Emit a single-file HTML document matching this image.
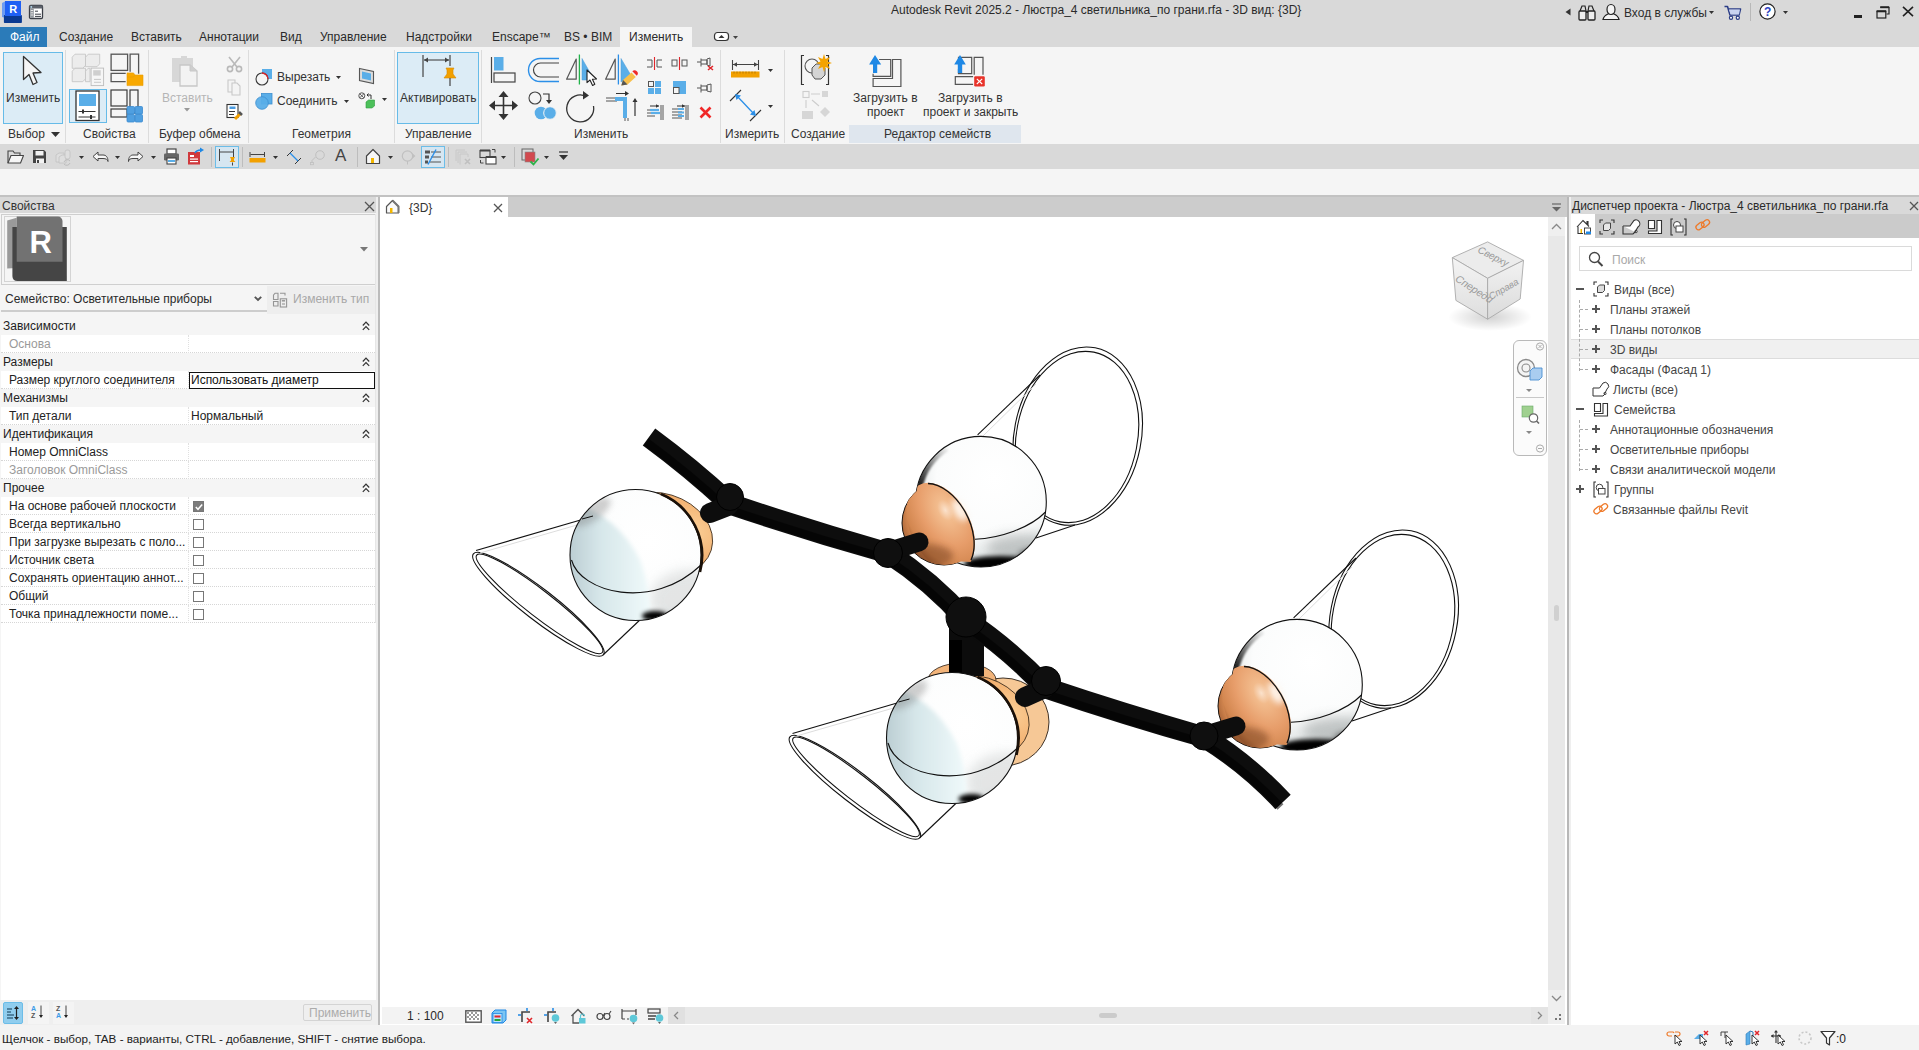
<!DOCTYPE html>
<html><head><meta charset="utf-8">
<style>
*{margin:0;padding:0;box-sizing:border-box}
html,body{width:1919px;height:1050px;overflow:hidden;background:#f5f5f5;font-family:"Liberation Sans",sans-serif;font-size:12px;color:#222}
.a{position:absolute}
.t{position:absolute;white-space:nowrap;line-height:12px}
svg{position:absolute;overflow:visible}
</style></head><body>

<div class="a" style="left:0px;top:0px;width:1919px;height:47px;background:#d9d9d9;"></div>
<div class="a" style="left:0px;top:47px;width:1919px;height:97px;background:#f5f5f5;"></div>
<div class="a" style="left:0px;top:144px;width:1919px;height:25px;background:#d9d9d9;"></div>
<div class="a" style="left:0px;top:169px;width:1919px;height:26px;background:#f5f5f5;"></div>
<div class="a" style="left:0px;top:195px;width:1919px;height:2px;background:#c2c2c2;"></div>
<svg style="left:0px;top:0px;" width="26" height="26" viewBox="0 0 26 26">
<path d="M2 3 L5 1.5 L5 17.8 L2 17 Z" fill="#6d9cf2"/>
<rect x="3.9" y="15" width="18" height="8" rx="0.8" fill="#0b3a91"/>
<rect x="5" y="1" width="16" height="15" fill="#1f60f4"/>
<text x="9.2" y="13.3" font-family="Liberation Sans" font-weight="bold" font-size="11" fill="#fff">R</text>
</svg>
<svg style="left:28px;top:4px;" width="16" height="16" viewBox="0 0 16 16">
<rect x="1.5" y="1.5" width="13" height="13" rx="1.2" fill="#fff" stroke="#3b3f47" stroke-width="1.3"/>
<rect x="1.5" y="1.5" width="13" height="3" fill="#5d626b"/>
<rect x="2.5" y="2.2" width="1.6" height="1.5" fill="#bfe9ff"/>
<rect x="2.2" y="4.5" width="3.6" height="9.3" fill="#8f949b"/>
<path d="M2.8 6.5h2.4M2.8 8.8h2.4M2.8 11h2.4" stroke="#e8e8e8" stroke-width="1"/>
<path d="M7 7.2h3M7 10.2h6M7 12.4h6" stroke="#3b3f47" stroke-width="1"/>
</svg>
<div class="t" style="left:891px;top:4px;color:#2a2a2a;font-size:12px;">Autodesk Revit 2025.2 - Люстра_4 светильника_по грани.rfa - 3D вид: {3D}</div>
<svg style="left:1565px;top:8px;" width="6" height="8" viewBox="0 0 6 8"><path d="M5.5 0.5 L0.5 4 L5.5 7.5Z" fill="#333"/></svg>
<svg style="left:1578px;top:4px;" width="18" height="17" viewBox="0 0 18 17">
<path d="M2 7 L4 2 L7 2 L8 7 M10 7 L11 2 L14 2 L16 7" fill="#ddd" stroke="#222" stroke-width="1.2"/>
<rect x="1" y="7" width="7" height="9" rx="1" fill="#eee" stroke="#222" stroke-width="1.3"/>
<rect x="10" y="7" width="7" height="9" rx="1" fill="#eee" stroke="#222" stroke-width="1.3"/>
<path d="M8 8h2" stroke="#222" stroke-width="2"/>
</svg>
<svg style="left:1602px;top:3px;" width="18" height="18" viewBox="0 0 18 18">
<path d="M1 16.5 C2 12 5 11.5 7 10.5 L11 10.5 C13 11.5 16 12 17 16.5 Z" fill="#f4f4f4" stroke="#222" stroke-width="1.2"/>
<ellipse cx="9" cy="6.5" rx="4" ry="5" fill="#f4f4f4" stroke="#222" stroke-width="1.2"/>
</svg>
<div class="t" style="left:1624px;top:7px;color:#2d2d2d;font-size:12px;">Вход в службы</div>
<svg style="left:1709px;top:11px;" width="5" height="3" viewBox="0 0 5 3"><path d="M0 0h5L2.5 3Z" fill="#333"/></svg>
<svg style="left:1724px;top:5px;" width="18" height="15" viewBox="0 0 18 15">
<path d="M0.5 1.5 L3.5 1.5 L6 10 L15 10 L16.5 4 L4.5 4" fill="none" stroke="#2b3d86" stroke-width="1.6" stroke-linejoin="round"/>
<path d="M5 4.5 L16 4.5 L15 9.5 L6.5 9.5Z" fill="#c9d3f0"/>
<circle cx="7" cy="12.8" r="1.6" fill="#fff" stroke="#2b3d86" stroke-width="1.2"/>
<circle cx="13.8" cy="12.8" r="1.6" fill="#fff" stroke="#2b3d86" stroke-width="1.2"/>
</svg>
<div class="a" style="left:1750px;top:3px;width:1px;height:18px;background:#b8b8b8;"></div>
<svg style="left:1759px;top:3px;" width="18" height="18" viewBox="0 0 18 18">
<circle cx="8.5" cy="8.5" r="7.6" fill="#fff" stroke="#222" stroke-width="1.2"/>
<text x="8.6" y="13" text-anchor="middle" font-family="Liberation Sans" font-weight="bold" font-size="12" fill="#2b42c2">?</text>
</svg>
<svg style="left:1783px;top:11px;" width="5" height="3" viewBox="0 0 5 3"><path d="M0 0h5L2.5 3Z" fill="#333"/></svg>
<div class="a" style="left:1854px;top:15px;width:8px;height:3px;background:#222;"></div>
<svg style="left:1876px;top:6px;" width="15" height="13" viewBox="0 0 15 13">
<path d="M4.5 1.5h8.5v6.5h-2.5" fill="none" stroke="#222" stroke-width="1.2"/>
<path d="M4.2 1.2h9" stroke="#222" stroke-width="2"/>
<rect x="1" y="5.5" width="8.8" height="6.5" fill="none" stroke="#222" stroke-width="1.2"/>
<path d="M0.6 5.2h9.6" stroke="#222" stroke-width="2"/>
</svg>
<svg style="left:1902px;top:6px;" width="12" height="11" viewBox="0 0 12 11"><path d="M1 0.8 L11 10.2 M11 0.8 L1 10.2" stroke="#222" stroke-width="1.6"/></svg>
<div class="a" style="left:0px;top:27px;width:47px;height:20px;background:#2b7bb9;"></div>
<div class="t" style="left:10px;top:31px;color:#ffffff;font-size:12px;">Файл</div>
<div class="t" style="left:59px;top:31px;color:#2a2a2a;font-size:12px;">Создание</div>
<div class="t" style="left:131px;top:31px;color:#2a2a2a;font-size:12px;">Вставить</div>
<div class="t" style="left:199px;top:31px;color:#2a2a2a;font-size:12px;">Аннотации</div>
<div class="t" style="left:280px;top:31px;color:#2a2a2a;font-size:12px;">Вид</div>
<div class="t" style="left:320px;top:31px;color:#2a2a2a;font-size:12px;">Управление</div>
<div class="t" style="left:406px;top:31px;color:#2a2a2a;font-size:12px;">Надстройки</div>
<div class="t" style="left:492px;top:31px;color:#2a2a2a;font-size:12px;">Enscape™</div>
<div class="t" style="left:564px;top:31px;color:#2a2a2a;font-size:12px;">BS • BIM</div>
<div class="a" style="left:620px;top:27px;width:72px;height:20px;background:#f5f5f5;"></div>
<div class="t" style="left:629px;top:31px;color:#2a2a2a;font-size:12px;">Изменить</div>
<svg style="left:713px;top:31px;" width="24" height="12" viewBox="0 0 24 12">
<rect x="1.5" y="1.5" width="14" height="8" rx="3" fill="#fff" stroke="#333" stroke-width="1.2"/>
<path d="M5.5 7 L8.5 4 L11.5 7Z" fill="#333"/>
<path d="M20 5h5l-2.5 3z" fill="#444"/>
</svg>
<div class="a" style="left:65px;top:50px;width:1px;height:93px;background:#dcdcdc;"></div>
<div class="a" style="left:148px;top:50px;width:1px;height:93px;background:#dcdcdc;"></div>
<div class="a" style="left:248px;top:50px;width:1px;height:93px;background:#dcdcdc;"></div>
<div class="a" style="left:394px;top:50px;width:1px;height:93px;background:#dcdcdc;"></div>
<div class="a" style="left:481px;top:50px;width:1px;height:93px;background:#dcdcdc;"></div>
<div class="a" style="left:720px;top:50px;width:1px;height:93px;background:#dcdcdc;"></div>
<div class="a" style="left:784px;top:50px;width:1px;height:93px;background:#dcdcdc;"></div>
<div class="t" style="left:8px;top:128px;color:#333333;font-size:12px;">Выбор</div>
<svg style="left:51px;top:132px;" width="9" height="5" viewBox="0 0 9 5"><path d="M0 0h9L4.5 5z" fill="#333"/></svg>
<div class="t" style="left:83px;top:128px;color:#333333;font-size:12px;">Свойства</div>
<div class="t" style="left:159px;top:128px;color:#333333;font-size:12px;">Буфер обмена</div>
<div class="t" style="left:292px;top:128px;color:#333333;font-size:12px;">Геометрия</div>
<div class="t" style="left:405px;top:128px;color:#333333;font-size:12px;">Управление</div>
<div class="t" style="left:574px;top:128px;color:#333333;font-size:12px;">Изменить</div>
<div class="t" style="left:725px;top:128px;color:#333333;font-size:12px;">Измерить</div>
<div class="t" style="left:791px;top:128px;color:#333333;font-size:12px;">Создание</div>
<div class="a" style="left:849px;top:125px;width:172px;height:18px;background:#dfe6ee;"></div>
<div class="t" style="left:884px;top:128px;color:#333333;font-size:12px;">Редактор семейств</div>
<div class="a" style="left:3px;top:52px;width:60px;height:72px;background:#dcecf6;border:1px solid #66bbe8"></div>
<svg style="left:22px;top:55px;" width="21" height="33" viewBox="0 0 21 33"><path d="M1.5 1.5 L1.5 24.5 L7 19.5 L11 29.5 L15 27.5 L11 18 L19 17.5 Z" fill="#f5f5f5" stroke="#333" stroke-width="1.3" stroke-linejoin="round"/></svg>
<div class="t" style="left:6px;top:92px;color:#333333;font-size:12px;">Изменить</div>
<svg style="left:68px;top:50px;" width="80" height="40" viewBox="0 0 80 40">
<g fill="#ececec" stroke="#c6c6c6" stroke-width="0.9">
<path d="M4.2,7.2 L7,4.2 L17.5,4.2 L17.5,15.3 L14.8,18.3 L4.2,18.3 Z"/>
<path d="M17.5,7.2 L20.3,4.2 L31.7,4.2 L31.7,13.8 L29,16.7 L17.5,16.7 Z"/>
<path d="M4.2,21.2 L7,18.3 L17.5,18.3 L17.5,28.8 L14.8,31.7 L4.2,31.7 Z"/>
<path d="M17.5,21.2 L20,18.3 L22,18.3 L22,31.7 L17.5,31.7 Z"/>
</g>
<rect x="23.1" y="18.1" width="12.5" height="17.5" fill="#f6f6f6" stroke="#bdbdbd" stroke-width="0.9"/>
<rect x="25.2" y="20.2" width="7.5" height="5.4" fill="#cfcfcf"/>
<path d="M26,29.4h7M26,32.3h7" stroke="#c2c2c2" stroke-width="0.9"/>
<g fill="none" stroke="#555" stroke-width="1.3">
<rect x="43.1" y="4.2" width="16.5" height="16.2"/>
<path d="M62.1,21.7 V4.2 H70.6 V23.7"/>
<path d="M57.7,23.3 H43.1 V31.7 H57.7"/>
</g>
<path d="M59,22.9 H65.5 L67,25 H75 V35.6 H59 Z" fill="#f8a800" stroke="#e89c00" stroke-width="0.6"/>
<path d="M59,27 H65.5 L67,25" fill="none" stroke="#e89c00" stroke-width="0.6"/>
</svg>
<div class="a" style="left:69px;top:89px;width:38px;height:34px;background:#dcecf6;border:1px solid #66bbe8"></div>
<svg style="left:75px;top:90px;" width="26" height="32" viewBox="0 0 26 32">
<rect x="1" y="1" width="23" height="29.5" fill="#fff" stroke="#333" stroke-width="1.3"/>
<rect x="4" y="4" width="17" height="12" fill="#5aaee8"/>
<path d="M3.5 21.5h17M3.5 27h17" stroke="#333" stroke-width="1.1"/>
<path d="M8 19.5v4M16 25v4" stroke="#333" stroke-width="2"/>
</svg>
<svg style="left:110px;top:89px;" width="34" height="34" viewBox="0 0 34 34">
<g fill="none" stroke="#3a3a3a" stroke-width="1.2">
<rect x="1" y="1" width="16" height="16"/><rect x="20" y="1" width="8" height="23"/><rect x="1" y="20" width="16" height="8"/>
</g>
<g fill="#4f9fe0" stroke="#3a8ad0" stroke-width="0.8">
<rect x="17" y="17.5" width="7.5" height="7.5" rx="1"/><rect x="25" y="17.5" width="7.5" height="7.5" rx="1"/>
<rect x="17" y="25.5" width="7.5" height="7.5" rx="1"/><rect x="25" y="25.5" width="7.5" height="7.5" rx="1"/>
</g>
</svg>
<svg style="left:171px;top:54px;" width="28" height="34" viewBox="0 0 28 34">
<path d="M1 4 L10 4 L10 2 L16 2 L16 4 L22 4 L22 28 L1 28Z" fill="#d7d7d7"/>
<path d="M9 11 L19 11 L26 17 L26 32 L9 32Z" fill="#f3f3f3" stroke="#c8c8c8" stroke-width="1.3"/>
<path d="M19 11 L19 17 L26 17" fill="#cfcfcf" stroke="#c8c8c8" stroke-width="1"/>
</svg>
<div class="t" style="left:162px;top:92px;color:#b5b5b5;font-size:12px;">Вставить</div>
<svg style="left:184px;top:108px;" width="6" height="4" viewBox="0 0 6 4"><path d="M0 0h6L3 3.5z" fill="#999"/></svg>
<svg style="left:226px;top:56px;" width="17" height="16" viewBox="0 0 17 16">
<g stroke="#b9b9b9" stroke-width="1.6" fill="none">
<path d="M3 1 L11 11 M14 1 L6 11"/><circle cx="4" cy="13" r="2.6"/><circle cx="13" cy="13" r="2.6"/></g></svg>
<svg style="left:227px;top:79px;" width="14" height="17" viewBox="0 0 14 17"><g fill="#f4f4f4" stroke="#c8c8c8" stroke-width="1.1"><path d="M1 1h7v12H1z"/><path d="M5 4h5l3 3v9H5z"/></g></svg>
<svg style="left:226px;top:103px;" width="17" height="17" viewBox="0 0 17 17">
<rect x="1" y="1.5" width="11" height="13" fill="#fff" stroke="#333" stroke-width="1.1"/>
<rect x="3.5" y="3.5" width="6" height="2.5" fill="#4a9be0"/>
<path d="M3 8.5h6M3 11.5h5" stroke="#333" stroke-width="1"/>
<path d="M9 16 L15 10" stroke="#f2a000" stroke-width="3"/>
<path d="M13 9 L16 12" stroke="#555" stroke-width="2.5"/>
</svg>
<svg style="left:255px;top:68px;" width="18" height="18" viewBox="0 0 18 18">
<rect x="7" y="1" width="10" height="10" fill="#5aaee8"/>
<circle cx="7" cy="11" r="6" fill="#f5f5f5" stroke="#3a3a3a" stroke-width="1.1"/>
<path d="M7 5 A6 6 0 0 1 13 11" fill="none" stroke="#d9252a" stroke-width="1.3"/>
</svg>
<div class="t" style="left:277px;top:71px;color:#333333;font-size:12px;">Вырезать</div>
<svg style="left:336px;top:76px;" width="5" height="4" viewBox="0 0 5 4"><path d="M0 0h5L2.5 3z" fill="#333"/></svg>
<svg style="left:255px;top:93px;" width="18" height="17" viewBox="0 0 18 17">
<rect x="6.5" y="0.5" width="10.5" height="10.5" fill="#5aaee8" stroke="#3d8fd0" stroke-width="0.8"/>
<circle cx="7" cy="10" r="6.3" fill="#5aaee8" stroke="#3d8fd0" stroke-width="0.8" fill-opacity="0.95"/>
</svg>
<div class="t" style="left:277px;top:95px;color:#333333;font-size:12px;">Соединить</div>
<svg style="left:344px;top:100px;" width="5" height="4" viewBox="0 0 5 4"><path d="M0 0h5L2.5 3z" fill="#333"/></svg>
<svg style="left:358px;top:67px;" width="17" height="18" viewBox="0 0 17 18">
<path d="M1.5 1.5 L15.5 4.5 L15.5 16.5 L1.5 13.5Z" fill="#dcdcdc" stroke="#555" stroke-width="1.1"/>
<path d="M4 4.5 L13 6.5 L13 13.5 L4 11.5Z" fill="#5aaee8"/>
</svg>
<svg style="left:358px;top:92px;" width="18" height="17" viewBox="0 0 18 17">
<circle cx="3.8" cy="3.8" r="3" fill="none" stroke="#555" stroke-width="1"/>
<path d="M1.8 1.8l4 4M5.8 1.8l-4 4" stroke="#555" stroke-width="0.9"/>
<path d="M9 3 L13 3 L13 7 M9 3 L10.5 1.5 M9 3 L10.5 4.5" fill="none" stroke="#333" stroke-width="1"/>
<path d="M8 10 L10.5 8 L16.5 8 L16.5 14 L14 16 L8 16Z" fill="#4cc05a" stroke="#2f9a40" stroke-width="0.6"/>
</svg>
<svg style="left:382px;top:98px;" width="6" height="4" viewBox="0 0 6 4"><path d="M0 0h5L2.5 3z" fill="#333"/></svg>
<div class="a" style="left:397px;top:52px;width:82px;height:72px;background:#dcecf6;border:1px solid #66bbe8"></div>
<svg style="left:421px;top:54px;" width="35" height="34" viewBox="0 0 35 34">
<path d="M2 1v22M29 1v11" stroke="#444" stroke-width="1.2"/>
<path d="M3 6h25" stroke="#444" stroke-width="1.1"/>
<path d="M3 6l4-2.5v5zM28 6l-4-2.5v5z" fill="#444"/>
<path d="M25 14 L33 14 L32 16 L32 20 L35 24 L23 24 L26 20 L26 16Z" fill="#f2a000" stroke="#d98c00" stroke-width="0.6"/>
<path d="M29 24v8" stroke="#444" stroke-width="1.2"/>
</svg>
<div class="t" style="left:400px;top:92px;color:#333333;font-size:12px;">Активировать</div>
<svg style="left:490px;top:56px;" width="27" height="28" viewBox="0 0 27 28">
<path d="M1.5 1v26" stroke="#444" stroke-width="1.2"/>
<rect x="4" y="1" width="9.5" height="13.5" fill="#5aaee8"/>
<rect x="4" y="17" width="21" height="9" fill="none" stroke="#444" stroke-width="1.2"/>
</svg>
<svg style="left:526px;top:57px;" width="34" height="26" viewBox="0 0 34 26">
<path d="M33 1.5 L14 1.5 A11.5 11.5 0 0 0 14 24.5 L33 24.5" fill="none" stroke="#2b8fe8" stroke-width="1.4"/>
<path d="M33 6 L14.5 6 A7 7 0 0 0 14.5 20 L33 20" fill="none" stroke="#444" stroke-width="1.2"/>
</svg>
<svg style="left:565px;top:53px;" width="33" height="33" viewBox="0 0 33 33">
<path d="M11.2,6 L11.2,26.2 L1.6,26.2Z" fill="#f6f6f6" stroke="#555" stroke-width="1.2" stroke-linejoin="round"/>
<path d="M14.4,1.5v30" stroke="#22b34a" stroke-width="1.3"/>
<path d="M17,5.5 L27,23 L27,27 L17,27Z" fill="#5aaee8" stroke="#4a9ad8" stroke-width="0.5"/>
<path d="M22,17 L22,29.6 L25,27 L27.6,32.4 L29.8,31.3 L27.4,26.3 L31.5,26 Z" fill="#fff" stroke="#222" stroke-width="1.1" stroke-linejoin="round"/>
</svg>
<svg style="left:604px;top:53px;" width="34" height="33" viewBox="0 0 34 33">
<path d="M11.2,6 L11.2,26.2 L1.6,26.2Z" fill="#f6f6f6" stroke="#555" stroke-width="1.2" stroke-linejoin="round"/>
<path d="M14.4,1.5v30" stroke="#2b8fe8" stroke-width="1.3"/>
<path d="M17,5.5 L27.7,23.5 L17,29Z" fill="#5aaee8" stroke="#4a9ad8" stroke-width="0.5"/>
<path d="M17.3,32.5 L19,27 L27.5,19.5 L31.8,24 L23.5,31.5Z" fill="#f8c04c"/>
<path d="M17.3,32.5 L19,27 L23.5,31.5Z" fill="#555"/>
<path d="M28.3,18.3 L32.8,22.8 A3.18 3.18 0 0 0 28.3,18.3 Z" fill="#ee2a2a"/>
</svg>
<svg style="left:489px;top:91px;" width="30" height="30" viewBox="0 0 30 30">
<path d="M14.5 3v23M2.5 14.5h24" stroke="#333" stroke-width="1.6"/>
<path d="M14.5 0 L19.5 6 L9.5 6Z M14.5 29 L19.5 23 L9.5 23Z M0 14.5 L6 9.5 L6 19.5Z M29 14.5 L23 9.5 L23 19.5Z" fill="#333"/>
</svg>
<svg style="left:528px;top:91px;" width="30" height="30" viewBox="0 0 30 30">
<circle cx="7" cy="7" r="6" fill="none" stroke="#444" stroke-width="1.1"/>
<path d="M15 3 L21 3 L21 10" fill="none" stroke="#333" stroke-width="1.2"/>
<path d="M18 9 L24 9 L21 13Z" fill="#333"/>
<circle cx="13" cy="22" r="6.3" fill="#5aaee8"/>
<circle cx="22" cy="22" r="6.3" fill="#5aaee8" stroke="#f5f5f5" stroke-width="1"/>
</svg>
<svg style="left:567px;top:89px;" width="30" height="32" viewBox="0 0 30 32">
<path d="M19.5 5.5 A13.5 13.5 0 1 0 26.5 15" fill="none" stroke="#333" stroke-width="1.3" transform="translate(0,2)"/>
<path d="M16 2 L22 6.5 L16 10.5Z" fill="#333"/>
</svg>
<svg style="left:605px;top:91px;" width="33" height="30" viewBox="0 0 33 30">
<path d="M1 7h11M1 10h11" stroke="#555" stroke-width="1"/>
<path d="M10 6 h12 v21 h-4 v-17 h-8Z" fill="#5aaee8"/>
<path d="M20 27v3M23 27v3" stroke="#555" stroke-width="1"/>
<path d="M11 2.5h12" stroke="#333" stroke-width="1"/><path d="M24 2.5l-4-2.5v5z" fill="#333"/>
<path d="M30 25V9" stroke="#333" stroke-width="1.2"/><path d="M30 7l-2.5 4h5z" fill="#333"/>
</svg>
<svg style="left:646px;top:57px;" width="17" height="13" viewBox="0 0 17 13">
<path d="M1 3h5v7H1M16 3h-5v7h5" fill="none" stroke="#555" stroke-width="1"/>
<path d="M8.5 0v13" stroke="#e0262b" stroke-width="1.1"/></svg>
<svg style="left:671px;top:57px;" width="17" height="13" viewBox="0 0 17 13">
<rect x="1" y="3" width="5" height="6" fill="none" stroke="#555" stroke-width="1"/>
<rect x="11" y="3" width="5" height="6" fill="none" stroke="#555" stroke-width="1"/>
<path d="M8.5 0v13" stroke="#e0262b" stroke-width="1.1"/></svg>
<svg style="left:697px;top:57px;" width="17" height="14" viewBox="0 0 17 14">
<path d="M0 5h4M4 1.5v8M4 3h6v4H4M10 2v6l3 1v-8z" fill="none" stroke="#555" stroke-width="1"/>
<path d="M11 9l5 4M16 9l-5 4" stroke="#e0262b" stroke-width="1.6"/></svg>
<svg style="left:647px;top:80px;" width="15" height="15" viewBox="0 0 15 15"><g fill="#5aaee8"><rect x="8" y="1" width="6" height="6"/><rect x="1" y="8" width="6" height="6"/><rect x="8" y="8" width="6" height="6"/></g>
<rect x="1.5" y="1.5" width="5" height="5" fill="none" stroke="#555" stroke-width="1"/></svg>
<svg style="left:672px;top:80px;" width="15" height="15" viewBox="0 0 15 15"><path d="M1 1h13v13H7V7H1z" fill="#5aaee8"/><rect x="1.5" y="7.5" width="5.5" height="6" fill="none" stroke="#555" stroke-width="1"/></svg>
<svg style="left:697px;top:82px;" width="16" height="12" viewBox="0 0 16 12"><path d="M0 6h4M4 2.5v8M4 4h6v4H4M10 3v6l4 1V2z" fill="none" stroke="#555" stroke-width="1"/></svg>
<svg style="left:646px;top:104px;" width="18" height="16" viewBox="0 0 18 16">
<path d="M1 6h8M1 9h8M1 12h8" stroke="#555" stroke-width="1"/>
<path d="M4 6h9" stroke="#5aaee8" stroke-width="2.2"/><path d="M5 9h9" stroke="#5aaee8" stroke-width="2.2"/>
<path d="M4 2h9" stroke="#333" stroke-width="1"/><path d="M13 2l-3-1.8v3.6z" fill="#333"/>
<path d="M15 1v15M17 1v15" stroke="#555" stroke-width="1"/></svg>
<svg style="left:671px;top:104px;" width="18" height="16" viewBox="0 0 18 16">
<path d="M1 5h10M1 8h10M1 11h10M1 14h10" stroke="#555" stroke-width="1"/>
<path d="M7 5h6M7 8.5h6M7 12h6" stroke="#5aaee8" stroke-width="2"/>
<path d="M6 2h8" stroke="#333" stroke-width="1"/><path d="M14 2l-3-1.8v3.6z" fill="#333"/>
<path d="M15 1v15M17 1v15" stroke="#555" stroke-width="1"/></svg>
<svg style="left:699px;top:106px;" width="13" height="13" viewBox="0 0 13 13"><path d="M1.5 1.5l10 10M11.5 1.5l-10 10" stroke="#f02828" stroke-width="2.6"/></svg>
<svg style="left:731px;top:59px;" width="30" height="20" viewBox="0 0 30 20">
<path d="M1.5 1v10M27.5 1v10" stroke="#444" stroke-width="1.1"/>
<path d="M2 5.5h25" stroke="#444" stroke-width="1"/><path d="M2 5.5l4-2.3v4.6zM27 5.5l-4-2.3v4.6z" fill="#444"/>
<rect x="0" y="12.5" width="28.5" height="6" fill="#f2a000"/>
<path d="M3 12.5v2M6 12.5v2M9 12.5v2M12 12.5v2M15 12.5v2M18 12.5v2M21 12.5v2M24 12.5v2" stroke="#a86e00" stroke-width="0.8"/>
</svg>
<svg style="left:768px;top:69px;" width="6" height="4" viewBox="0 0 6 4"><path d="M0 0h5L2.5 3z" fill="#333"/></svg>
<svg style="left:729px;top:89px;" width="33" height="33" viewBox="0 0 33 33">
<path d="M1 12 L12 1M21 32 L32 21" stroke="#333" stroke-width="1.1"/>
<path d="M8 7 L25 25" stroke="#2b8fe8" stroke-width="1.3"/>
<path d="M6 5 L12 6.5 L7.5 11Z M27 27 L21 25.5 L25.5 21Z" fill="#2b8fe8"/>
</svg>
<svg style="left:768px;top:105px;" width="6" height="4" viewBox="0 0 6 4"><path d="M0 0h5L2.5 3z" fill="#333"/></svg>
<svg style="left:800px;top:54px;" width="33" height="32" viewBox="0 0 33 32">
<path d="M4 1.5H1.5v29H4M26 1.5h2.5v29H26" fill="none" stroke="#333" stroke-width="1.2"/>
<circle cx="12" cy="12" r="7" fill="none" stroke="#555" stroke-width="1.1"/>
<path d="M12 14 L16 10 L22 10 L25 14 L25 21 L21 25 L15 25 L12 21Z" fill="#d4d4d4" stroke="#555" stroke-width="1"/>
<path d="M24 0 L25.5 5 L30 3 L27.5 7.5 L32 9 L27.5 10.5 L30 15 L25.5 13 L24 18 L22.5 13 L18 15 L20.5 10.5 L16 9 L20.5 7.5 L18 3 L22.5 5Z" fill="#f4a300"/>
</svg>
<svg style="left:801px;top:90px;" width="32" height="31" viewBox="0 0 32 31">
<g fill="none" stroke="#cdcdcd" stroke-width="1.1"><rect x="2" y="1.5" width="6" height="6"/><path d="M10 4h9M5 10v8M11 10l7 6"/></g>
<g fill="#d6d6d6"><rect x="21" y="1" width="6" height="6"/><rect x="1" y="21" width="11" height="8"/><path d="M24 17l5 5-5 5-5-5z"/></g>
</svg>
<svg style="left:860px;top:50px;" width="50" height="40" viewBox="0 0 50 40">
<g fill="none" stroke="#555" stroke-width="1.2">
<path d="M19.1,9.5 H30.7 V26.3 H13.1 V23.7"/>
<path d="M32.5,9.5 H40.9 V36.5 H13.1 V28.5 H32.5 Z"/>
</g>
<path d="M15,5.1 L21.2,14.6 L17.2,14.6 L17.2,23 L13,23 L13,14.6 L9.1,14.6 Z" fill="#1e88e5"/>
</svg>
<div class="t" style="left:853px;top:92px;color:#333333;font-size:12px;">Загрузить в</div>
<div class="t" style="left:867px;top:106px;color:#333333;font-size:12px;">проект</div>
<svg style="left:950px;top:50px;" width="40" height="40" viewBox="0 0 40 40">
<g fill="none" stroke="#555" stroke-width="1.2">
<path d="M8.5,11 V7.3 H21.7 V23.7 H8.5 V19"/>
<path d="M24.2,24.8 V7.3 H33 V24.8"/>
<path d="M23.1,26.6 H5.3 V34.3 H23.1"/>
</g>
<path d="M10,5.1 L15.8,14.6 L12.2,14.6 L12.2,23 L7.8,23 L7.8,14.6 L4.2,14.6 Z" fill="#1e88e5"/>
<rect x="24.2" y="26.3" width="10.6" height="10.2" rx="1.2" fill="#e8332a"/>
<path d="M26.8,28.8 L32.2,34 M32.2,28.8 L26.8,34" stroke="#fff" stroke-width="1.1"/>
</svg>
<div class="t" style="left:938px;top:92px;color:#333333;font-size:12px;">Загрузить в</div>
<div class="t" style="left:923px;top:106px;color:#333333;font-size:12px;">проект и закрыть</div>
<svg style="left:7px;top:149px;" width="17" height="15" viewBox="0 0 17 15"><path d="M1 14 L1 2 L6 2 L7.5 4 L13 4 L13 6.5" fill="none" stroke="#444" stroke-width="1.1"/>
<path d="M1 14 L4 6.5 L16.5 6.5 L13.5 14Z" fill="#f6f6f6" stroke="#444" stroke-width="1.1" stroke-linejoin="round"/></svg>
<svg style="left:32px;top:149px;" width="15" height="15" viewBox="0 0 15 15"><path d="M1 1h11l2 2v11H1z" fill="#444"/><rect x="3.5" y="2" width="8" height="4.5" fill="#f2f2f2"/><rect x="4" y="9.5" width="8" height="4.5" fill="#f2f2f2"/><rect x="5" y="11" width="2" height="3" fill="#444"/></svg>
<svg style="left:55px;top:149px;" width="18" height="16" viewBox="0 0 18 16"><g fill="#dedede" stroke="#c2c2c2" stroke-width="0.8"><path d="M1 6l3-2h5v9H1z"/><path d="M4 8l3-2h4v8H4z"/><rect x="10" y="1" width="5" height="9" rx="2"/></g>
<path d="M9 13a3.5 3.5 0 0 1 6-1M15 14a3.5 3.5 0 0 1-6 1" fill="none" stroke="#bbb" stroke-width="1"/></svg>
<svg style="left:79px;top:156px;" width="5" height="3" viewBox="0 0 5 3"><path d="M0 0h5L2.5 3z" fill="#333"/></svg>
<svg style="left:92px;top:151px;" width="17" height="11" viewBox="0 0 17 11"><path d="M6 1 L1 5.5 L6 10 L6 7.5 L11 7.5 C14 7.5 15.5 8.5 16 10.5 C16 6 14 4 11 4 L6 4Z" fill="#f6f6f6" stroke="#444" stroke-width="1"/></svg>
<svg style="left:115px;top:156px;" width="5" height="3" viewBox="0 0 5 3"><path d="M0 0h5L2.5 3z" fill="#333"/></svg>
<svg style="left:128px;top:151px;" width="16" height="11" viewBox="0 0 16 11"><path d="M10 1 L15 5.5 L10 10 L10 7.5 L5 7.5 C2 7.5 0.8 8.5 0.5 10.5 C0.5 6 2.5 4 5 4 L10 4Z" fill="#f6f6f6" stroke="#444" stroke-width="1"/></svg>
<svg style="left:151px;top:156px;" width="5" height="3" viewBox="0 0 5 3"><path d="M0 0h5L2.5 3z" fill="#333"/></svg>
<svg style="left:163px;top:148px;" width="17" height="17" viewBox="0 0 17 17"><rect x="4" y="1" width="9" height="5" fill="#fff" stroke="#444" stroke-width="1.2"/>
<rect x="1" y="5.5" width="15" height="7" rx="1.2" fill="#666"/>
<rect x="4" y="10" width="9" height="6" fill="#fff" stroke="#444" stroke-width="1.1"/><rect x="5" y="12" width="7" height="2" fill="#5aaee8"/></svg>
<svg style="left:187px;top:148px;" width="17" height="17" viewBox="0 0 17 17"><rect x="1" y="4" width="12" height="12.5" fill="#d0393d"/>
<rect x="3" y="7" width="4" height="2" fill="#fff"/><rect x="3" y="10.5" width="8" height="1.2" fill="#fff"/><rect x="3" y="13" width="8" height="1.2" fill="#fff"/>
<path d="M8 5 C9 2.5 11 2 14 2" fill="none" stroke="#1e88e5" stroke-width="1.6"/><path d="M13 -0.5 L17 2 L13 4.5Z" fill="#1e88e5"/></svg>
<div class="a" style="left:211px;top:147px;width:1px;height:20px;background:#bdbdbd;"></div>
<div class="a" style="left:215px;top:146px;width:24px;height:22px;background:#d6e6f1;border:1px solid #6cbde8"></div>
<svg style="left:218px;top:148px;" width="18" height="18" viewBox="0 0 18 18"><path d="M1.5 1v12M15.5 1v8M2 4h13" stroke="#444" stroke-width="1"/>
<path d="M12 9h5l-1 2v1.5l1.5 1.5h-6l1.5-1.5V11z" fill="#f2a000"/><path d="M14.5 14.5v3" stroke="#444" stroke-width="1"/></svg>
<div class="a" style="left:242px;top:147px;width:1px;height:20px;background:#bdbdbd;"></div>
<svg style="left:249px;top:151px;" width="17" height="12" viewBox="0 0 17 12"><path d="M1 1v5M15.5 1v5M1.5 3.5h14" stroke="#444" stroke-width="1"/><rect x="0.5" y="7" width="16" height="4.5" fill="#f2a000"/></svg>
<svg style="left:273px;top:156px;" width="5" height="3" viewBox="0 0 5 3"><path d="M0 0h5L2.5 3z" fill="#333"/></svg>
<svg style="left:286px;top:149px;" width="16" height="16" viewBox="0 0 16 16"><path d="M1 7L7 1M9 15L15 9" stroke="#333" stroke-width="1"/><path d="M4 4L12 12" stroke="#2b8fe8" stroke-width="1.3"/></svg>
<svg style="left:310px;top:149px;" width="15" height="16" viewBox="0 0 15 16"><circle cx="10" cy="6" r="4.3" fill="none" stroke="#c0c0c0" stroke-width="1"/><path d="M5.5 8L2 11.5v2.5" fill="none" stroke="#c0c0c0" stroke-width="1"/><rect x="0.5" y="13.5" width="3" height="2.2" fill="none" stroke="#c0c0c0" stroke-width="0.8"/></svg>
<div class="t" style="left:335px;top:150px;color:#444;font-size:17px;">A</div>
<div class="a" style="left:357px;top:147px;width:1px;height:20px;background:#bdbdbd;"></div>
<svg style="left:365px;top:148px;" width="16" height="16" viewBox="0 0 16 16"><path d="M1.5 8 L8 1.5 L14.5 8 V15.5 H1.5Z" fill="#f6f6f6" stroke="#444" stroke-width="1.2" stroke-linejoin="round"/><rect x="6" y="10" width="3" height="5" fill="#f2b600"/></svg>
<svg style="left:388px;top:156px;" width="5" height="3" viewBox="0 0 5 3"><path d="M0 0h5L2.5 3z" fill="#333"/></svg>
<svg style="left:401px;top:148px;" width="15" height="17" viewBox="0 0 15 17"><circle cx="6.5" cy="8" r="5.2" fill="none" stroke="#c0c0c0" stroke-width="1.2"/><path d="M11 5l3.5 3-3.5 3z" fill="#c0c0c0"/><path d="M6.5 13v3.5" stroke="#c0c0c0"/></svg>
<div class="a" style="left:421px;top:146px;width:24px;height:22px;background:#d6e6f1;border:1px solid #6cbde8"></div>
<svg style="left:424px;top:149px;" width="18" height="16" viewBox="0 0 18 16"><rect x="1" y="1.5" width="5" height="3" fill="#555"/><rect x="1" y="6.5" width="4" height="3" fill="#555"/><rect x="1" y="11.5" width="3" height="3" fill="#555"/>
<path d="M7 3h10M7 8h10M6 13h11" stroke="#555" stroke-width="1.2"/><path d="M4 15.5L12 0.5" stroke="#2b8fe8" stroke-width="1.4"/></svg>
<div class="a" style="left:448px;top:147px;width:1px;height:20px;background:#bdbdbd;"></div>
<svg style="left:455px;top:149px;" width="17" height="16" viewBox="0 0 17 16"><g fill="none" stroke="#c8c8c8" stroke-width="1"><path d="M1 12V1h9M3 14V3h9M5 15.5V5h8v3"/></g><path d="M10 10l5 5M15 10l-5 5" stroke="#c0c0c0" stroke-width="1.6"/></svg>
<svg style="left:479px;top:148px;" width="18" height="17" viewBox="0 0 18 17"><rect x="1" y="2.5" width="10" height="7" fill="none" stroke="#444" stroke-width="1.1"/><path d="M1 2.5h10" stroke="#444" stroke-width="2"/>
<rect x="7" y="9" width="10" height="7" fill="#fff" stroke="#444" stroke-width="1.1"/><path d="M7 9h10" stroke="#444" stroke-width="2"/>
<path d="M13 1.5h3v3M1.5 12v3h3" fill="none" stroke="#444" stroke-width="1"/></svg>
<svg style="left:501px;top:156px;" width="5" height="3" viewBox="0 0 5 3"><path d="M0 0h5L2.5 3z" fill="#333"/></svg>
<div class="a" style="left:514px;top:147px;width:1px;height:20px;background:#bdbdbd;"></div>
<svg style="left:521px;top:148px;" width="18" height="17" viewBox="0 0 18 17"><rect x="1" y="1" width="11" height="11" fill="none" stroke="#666" stroke-width="1"/><rect x="4" y="4" width="10" height="10" fill="#d24a4f" stroke="#888" stroke-width="0.6"/>
<path d="M9.5 13.5l3 3 5-6" fill="none" stroke="#2eb24a" stroke-width="1.8"/></svg>
<svg style="left:544px;top:156px;" width="5" height="3" viewBox="0 0 5 3"><path d="M0 0h5L2.5 3z" fill="#333"/></svg>
<svg style="left:559px;top:151px;" width="9" height="10" viewBox="0 0 9 10"><path d="M0 1h9" stroke="#333" stroke-width="1.2"/><path d="M0 4h9L4.5 9z" fill="#333"/></svg>
<div class="a" style="left:0px;top:197px;width:377px;height:828px;background:#f5f5f5;"></div>
<div class="a" style="left:0px;top:197px;width:377px;height:16px;background:#d9d9d9;"></div>
<div class="t" style="left:2px;top:200px;color:#333;font-size:12px;">Свойства</div>
<svg style="left:364px;top:201px;" width="11" height="11" viewBox="0 0 11 11"><path d="M1 1L10 10M10 1L1 10" stroke="#555" stroke-width="1.3"/></svg>
<div class="a" style="left:1px;top:214px;width:375px;height:71px;background:#f5f5f5;border:1px solid #cfcfcf"></div>
<div class="a" style="left:4px;top:216px;width:67px;height:66px;background:#f5f5f5;border:1px solid #d4d4d4"></div>
<svg style="left:6px;top:216px;" width="64" height="66" viewBox="0 0 64 66">
<path d="M1.2 2.5 L10.7 -0.2 L10.7 50 L1.2 50.5Z" fill="#9a9a9a" transform="translate(0,2)"/>
<path d="M6.4,11 H60.8 V65 H11.5 Q6.4,65 6.4,60 Z" fill="#454545"/>
<path d="M10.7 0.6 H52 a4.5 4.5 0 0 1 4.5 4.5 V45.8 H10.7Z" fill="#727272"/>
<text x="23.5" y="36.5" font-family="Liberation Sans" font-weight="bold" font-size="31" fill="#fff">R</text>
</svg>
<svg style="left:360px;top:247px;" width="8" height="5" viewBox="0 0 8 5"><path d="M0 0h8L4 4.5z" fill="#777"/></svg>
<div class="t" style="left:5px;top:293px;color:#2a2a2a;font-size:12px;">Семейство: Осветительные приборы</div>
<svg style="left:254px;top:296px;" width="8" height="6" viewBox="0 0 8 6"><path d="M0.8 0.8L4 4L7.2 0.8" fill="none" stroke="#555" stroke-width="1.9"/></svg>
<div class="a" style="left:1px;top:310px;width:267px;height:2px;background:#cdcdcd;"></div>
<div class="a" style="left:267px;top:286px;width:109px;height:28px;background:#eeeeee;"></div>
<svg style="left:271px;top:290px;" width="17" height="17" viewBox="0 0 17 17"><g fill="none" stroke="#959595" stroke-width="1.1"><path d="M2.5,5 L4,3.3 H7 V9.5 H2.5 Z M9,3.3 H14 V5.5 M2.5,11.5 H7 V16 H2.5Z"/><rect x="9.3" y="8.8" width="6.3" height="8.2"/><path d="M10.8,10.8h3.3" stroke-width="1.5"/><path d="M11,14h3" /></g></svg>
<div class="t" style="left:293px;top:293px;color:#a8a8a8;font-size:12px;">Изменить тип</div>
<div class="t" style="left:3px;top:320px;color:#222;font-size:12px;">Зависимости</div>
<svg style="left:362px;top:321px;" width="8" height="10" viewBox="0 0 8 10"><path d="M0.8 4.5L4 1.2L7.2 4.5M0.8 8.8L4 5.5L7.2 8.8" fill="none" stroke="#333" stroke-width="1.2"/></svg>
<div class="a" style="left:1px;top:335px;width:374px;height:18px;background:#ffffff;"></div>
<div class="a" style="left:1px;top:352px;width:374px;height:1px;border-top:1px dotted #d6d6d6"></div>
<div class="a" style="left:188px;top:335px;width:1px;height:18px;border-left:1px dotted #e0e0e0"></div>
<div class="t" style="left:9px;top:338px;color:#9a9a9a;font-size:12px;">Основа</div>
<div class="t" style="left:3px;top:356px;color:#222;font-size:12px;">Размеры</div>
<svg style="left:362px;top:357px;" width="8" height="10" viewBox="0 0 8 10"><path d="M0.8 4.5L4 1.2L7.2 4.5M0.8 8.8L4 5.5L7.2 8.8" fill="none" stroke="#333" stroke-width="1.2"/></svg>
<div class="a" style="left:1px;top:371px;width:374px;height:18px;background:#ffffff;"></div>
<div class="a" style="left:1px;top:388px;width:374px;height:1px;border-top:1px dotted #d6d6d6"></div>
<div class="a" style="left:188px;top:371px;width:1px;height:18px;border-left:1px dotted #e0e0e0"></div>
<div class="t" style="left:9px;top:374px;color:#222;font-size:12px;">Размер круглого соединителя</div>
<div class="a" style="left:189px;top:372px;width:186px;height:17px;background:#fff;border:1.5px solid #111"></div>
<div class="t" style="left:191px;top:374px;color:#111;font-size:12px;">Использовать диаметр</div>
<div class="t" style="left:3px;top:392px;color:#222;font-size:12px;">Механизмы</div>
<svg style="left:362px;top:393px;" width="8" height="10" viewBox="0 0 8 10"><path d="M0.8 4.5L4 1.2L7.2 4.5M0.8 8.8L4 5.5L7.2 8.8" fill="none" stroke="#333" stroke-width="1.2"/></svg>
<div class="a" style="left:1px;top:407px;width:374px;height:18px;background:#ffffff;"></div>
<div class="a" style="left:1px;top:424px;width:374px;height:1px;border-top:1px dotted #d6d6d6"></div>
<div class="a" style="left:188px;top:407px;width:1px;height:18px;border-left:1px dotted #e0e0e0"></div>
<div class="t" style="left:9px;top:410px;color:#222;font-size:12px;">Тип детали</div>
<div class="t" style="left:191px;top:410px;color:#222;font-size:12px;">Нормальный</div>
<div class="t" style="left:3px;top:428px;color:#222;font-size:12px;">Идентификация</div>
<svg style="left:362px;top:429px;" width="8" height="10" viewBox="0 0 8 10"><path d="M0.8 4.5L4 1.2L7.2 4.5M0.8 8.8L4 5.5L7.2 8.8" fill="none" stroke="#333" stroke-width="1.2"/></svg>
<div class="a" style="left:1px;top:443px;width:374px;height:18px;background:#ffffff;"></div>
<div class="a" style="left:1px;top:460px;width:374px;height:1px;border-top:1px dotted #d6d6d6"></div>
<div class="a" style="left:188px;top:443px;width:1px;height:18px;border-left:1px dotted #e0e0e0"></div>
<div class="t" style="left:9px;top:446px;color:#222;font-size:12px;">Номер OmniClass</div>
<div class="a" style="left:1px;top:461px;width:374px;height:18px;background:#ffffff;"></div>
<div class="a" style="left:1px;top:478px;width:374px;height:1px;border-top:1px dotted #d6d6d6"></div>
<div class="a" style="left:188px;top:461px;width:1px;height:18px;border-left:1px dotted #e0e0e0"></div>
<div class="t" style="left:9px;top:464px;color:#9a9a9a;font-size:12px;">Заголовок OmniClass</div>
<div class="t" style="left:3px;top:482px;color:#222;font-size:12px;">Прочее</div>
<svg style="left:362px;top:483px;" width="8" height="10" viewBox="0 0 8 10"><path d="M0.8 4.5L4 1.2L7.2 4.5M0.8 8.8L4 5.5L7.2 8.8" fill="none" stroke="#333" stroke-width="1.2"/></svg>
<div class="a" style="left:1px;top:497px;width:374px;height:18px;background:#ffffff;"></div>
<div class="a" style="left:1px;top:514px;width:374px;height:1px;border-top:1px dotted #d6d6d6"></div>
<div class="a" style="left:188px;top:497px;width:1px;height:18px;border-left:1px dotted #e0e0e0"></div>
<div class="t" style="left:9px;top:500px;color:#222;font-size:12px;">На основе рабочей плоскости</div>
<div class="a" style="left:193px;top:501px;width:11px;height:11px;background:#7c7c7c;border:1px solid #777"></div>
<svg style="left:194px;top:502px;" width="10" height="10" viewBox="0 0 10 10"><path d="M1.8 5L4 7.3L8.2 2.5" fill="none" stroke="#fff" stroke-width="1.5"/></svg>
<div class="a" style="left:1px;top:515px;width:374px;height:18px;background:#ffffff;"></div>
<div class="a" style="left:1px;top:532px;width:374px;height:1px;border-top:1px dotted #d6d6d6"></div>
<div class="a" style="left:188px;top:515px;width:1px;height:18px;border-left:1px dotted #e0e0e0"></div>
<div class="t" style="left:9px;top:518px;color:#222;font-size:12px;">Всегда вертикально</div>
<div class="a" style="left:193px;top:519px;width:11px;height:11px;background:#fff;border:1px solid #777"></div>
<div class="a" style="left:1px;top:533px;width:374px;height:18px;background:#ffffff;"></div>
<div class="a" style="left:1px;top:550px;width:374px;height:1px;border-top:1px dotted #d6d6d6"></div>
<div class="a" style="left:188px;top:533px;width:1px;height:18px;border-left:1px dotted #e0e0e0"></div>
<div class="t" style="left:9px;top:536px;color:#222;font-size:12px;">При загрузке вырезать с поло...</div>
<div class="a" style="left:193px;top:537px;width:11px;height:11px;background:#fff;border:1px solid #777"></div>
<div class="a" style="left:1px;top:551px;width:374px;height:18px;background:#ffffff;"></div>
<div class="a" style="left:1px;top:568px;width:374px;height:1px;border-top:1px dotted #d6d6d6"></div>
<div class="a" style="left:188px;top:551px;width:1px;height:18px;border-left:1px dotted #e0e0e0"></div>
<div class="t" style="left:9px;top:554px;color:#222;font-size:12px;">Источник света</div>
<div class="a" style="left:193px;top:555px;width:11px;height:11px;background:#fff;border:1px solid #777"></div>
<div class="a" style="left:1px;top:569px;width:374px;height:18px;background:#ffffff;"></div>
<div class="a" style="left:1px;top:586px;width:374px;height:1px;border-top:1px dotted #d6d6d6"></div>
<div class="a" style="left:188px;top:569px;width:1px;height:18px;border-left:1px dotted #e0e0e0"></div>
<div class="t" style="left:9px;top:572px;color:#222;font-size:12px;">Сохранять ориентацию аннот...</div>
<div class="a" style="left:193px;top:573px;width:11px;height:11px;background:#fff;border:1px solid #777"></div>
<div class="a" style="left:1px;top:587px;width:374px;height:18px;background:#ffffff;"></div>
<div class="a" style="left:1px;top:604px;width:374px;height:1px;border-top:1px dotted #d6d6d6"></div>
<div class="a" style="left:188px;top:587px;width:1px;height:18px;border-left:1px dotted #e0e0e0"></div>
<div class="t" style="left:9px;top:590px;color:#222;font-size:12px;">Общий</div>
<div class="a" style="left:193px;top:591px;width:11px;height:11px;background:#fff;border:1px solid #777"></div>
<div class="a" style="left:1px;top:605px;width:374px;height:18px;background:#ffffff;"></div>
<div class="a" style="left:1px;top:622px;width:374px;height:1px;border-top:1px dotted #d6d6d6"></div>
<div class="a" style="left:188px;top:605px;width:1px;height:18px;border-left:1px dotted #e0e0e0"></div>
<div class="t" style="left:9px;top:608px;color:#222;font-size:12px;">Точка принадлежности поме...</div>
<div class="a" style="left:193px;top:609px;width:11px;height:11px;background:#fff;border:1px solid #777"></div>
<div class="a" style="left:1px;top:623px;width:375px;height:377px;background:#ffffff;"></div>
<div class="a" style="left:0px;top:1000px;width:377px;height:25px;background:#efefef;"></div>
<div class="a" style="left:3px;top:1002px;width:20px;height:22px;background:#90cdee;border:1px solid #6cbde8;border-radius:2px"></div>
<svg style="left:6px;top:1006px;" width="14" height="14" viewBox="0 0 14 14"><path d="M1 3h5M1 6h4M1 9h7M1 12h6" stroke="#3a6a86" stroke-width="1.3"/><path d="M10.5 2v10" stroke="#222" stroke-width="1.2"/><path d="M10.5 0l-2.5 3h5zM10.5 14l-2.5-3h5z" fill="#222"/></svg>
<div class="a" style="left:28px;top:1002px;width:21px;height:22px;background:#f4f4f4;"></div>
<svg style="left:31px;top:1005px;" width="14" height="14" viewBox="0 0 14 14"><text x="0" y="6" font-family="Liberation Sans" font-weight="bold" font-size="7" fill="#3c9be8">A</text><text x="0" y="13" font-family="Liberation Sans" font-weight="bold" font-size="7" fill="#555">Z</text><path d="M10 0.5v11" stroke="#444" stroke-width="1"/><path d="M10 13l-2-3h4z" fill="#222"/></svg>
<div class="a" style="left:53px;top:1002px;width:21px;height:22px;background:#f4f4f4;"></div>
<svg style="left:56px;top:1005px;" width="14" height="14" viewBox="0 0 14 14"><text x="0" y="6" font-family="Liberation Sans" font-weight="bold" font-size="7" fill="#555">Z</text><text x="0" y="13" font-family="Liberation Sans" font-weight="bold" font-size="7" fill="#3c9be8">A</text><path d="M10 0.5v11" stroke="#444" stroke-width="1"/><path d="M10 13l-2-3h4z" fill="#222"/></svg>
<div class="a" style="left:303px;top:1004px;width:69px;height:17px;background:#efefef;border:1px solid #d4d4d4;border-radius:2px"></div>
<div class="t" style="left:309px;top:1007px;color:#ababab;font-size:12px;">Применить</div>
<div class="a" style="left:375px;top:214px;width:1px;height:409px;background:#e6e6e6;"></div>
<div class="a" style="left:376px;top:197px;width:2px;height:828px;background:#efefef;"></div>
<div class="a" style="left:378px;top:197px;width:2px;height:828px;background:#bcbcbc;"></div>
<div class="a" style="left:380px;top:197px;width:1188px;height:828px;background:#ffffff;"></div>
<div class="a" style="left:380px;top:197px;width:1188px;height:20px;background:#cccccc;"></div>
<div class="a" style="left:380px;top:197px;width:128px;height:20px;background:#ffffff;"></div>
<svg style="left:385px;top:199px;" width="16" height="15" viewBox="0 0 16 15"><path d="M1.5 7.5 L7.5 1.5 L13.5 7.5 V14 H1.5Z" fill="#fafafa" stroke="#555" stroke-width="1.2" stroke-linejoin="round"/><path d="M7.5 1.5 L13.5 7.5 V14" fill="none" stroke="#777" stroke-width="2"/><rect x="5" y="9" width="2.5" height="5" fill="#f2b600"/></svg>
<div class="t" style="left:409px;top:202px;color:#333;font-size:12px;">{3D}</div>
<svg style="left:493px;top:203px;" width="10" height="10" viewBox="0 0 10 10"><path d="M1 1L9 9M9 1L1 9" stroke="#555" stroke-width="1.3"/></svg>
<svg style="left:1552px;top:203px;" width="9" height="9" viewBox="0 0 9 9"><path d="M0 1h9" stroke="#666" stroke-width="1.2"/><path d="M0 4h9L4.5 8.5z" fill="#666"/></svg>
<div class="a" style="left:1548px;top:217px;width:17px;height:790px;background:#e8e8e8;"></div>
<div class="a" style="left:1548px;top:217px;width:17px;height:19px;background:#efefef;"></div>
<svg style="left:1551px;top:223px;" width="11" height="7" viewBox="0 0 11 7"><path d="M1 6L5.5 1.5L10 6" fill="none" stroke="#888" stroke-width="1.3"/></svg>
<div class="a" style="left:1548px;top:990px;width:17px;height:17px;background:#efefef;"></div>
<svg style="left:1551px;top:995px;" width="11" height="7" viewBox="0 0 11 7"><path d="M1 1L5.5 5.5L10 1" fill="none" stroke="#888" stroke-width="1.3"/></svg>
<div class="a" style="left:1554px;top:605px;width:5px;height:16px;background:#d0d0d0;border-radius:3px"></div>
<div class="a" style="left:382px;top:1007px;width:286px;height:17px;background:#f3f3f3;"></div>
<div class="t" style="left:407px;top:1010px;color:#2a2a2a;font-size:12px;">1 : 100</div>
<svg style="left:465px;top:1010px;" width="17" height="13" viewBox="0 0 17 13"><rect x="0.8" y="0.8" width="15.4" height="11.4" fill="#fff" stroke="#555" stroke-width="1.4"/><g fill="#999"><rect x="2" y="2" width="2" height="2"/><rect x="6" y="2" width="2" height="2"/><rect x="10" y="2" width="2" height="2"/><rect x="4" y="4" width="2" height="2"/><rect x="8" y="4" width="2" height="2"/><rect x="12" y="4" width="2" height="2"/><rect x="2" y="6" width="2" height="2"/><rect x="6" y="6" width="2" height="2"/><rect x="10" y="6" width="2" height="2"/><rect x="4" y="8" width="2" height="2"/><rect x="8" y="8" width="2" height="2"/><rect x="12" y="8" width="2" height="2"/></g></svg>
<svg style="left:491px;top:1009px;" width="16" height="15" viewBox="0 0 16 15"><path d="M1 4L4 1H15V11L12 14H1Z" fill="#7cc5f2" stroke="#1e88e5" stroke-width="1"/><rect x="2" y="4.5" width="9" height="9" fill="#bfe3fa" stroke="#1e88e5" stroke-width="0.8"/><rect x="3.5" y="6.5" width="6" height="2" fill="#e0262b"/><rect x="3.5" y="10" width="6" height="2" fill="#22a83a"/></svg>
<svg style="left:517px;top:1008px;" width="17" height="16" viewBox="0 0 17 16"><path d="M10 0v3M1 7h3" stroke="#1e88e5" stroke-width="1.5"/><path d="M5 14V4h8" fill="none" stroke="#444" stroke-width="1.6"/><path d="M10 10l5 5M15 10l-5 5" stroke="#e0262b" stroke-width="1.6"/></svg>
<svg style="left:543px;top:1008px;" width="17" height="16" viewBox="0 0 17 16"><path d="M10 0v3M1 7h3" stroke="#1e88e5" stroke-width="1.5"/><path d="M5 14V4h8" fill="none" stroke="#444" stroke-width="1.6"/><circle cx="12.5" cy="10" r="3.8" fill="#5ec8d8"/><path d="M11 14h3l-1.5 2z" fill="#666"/></svg>
<svg style="left:570px;top:1008px;" width="17" height="16" viewBox="0 0 17 16"><path d="M1.5 8L8 1.5L14.5 8" fill="none" stroke="#555" stroke-width="1.5"/><path d="M3 7v8h6" fill="none" stroke="#555" stroke-width="1.3"/><rect x="9" y="10" width="6.5" height="5.5" fill="#5ec8d8"/><path d="M10.5 10V8a2 2 0 0 1 4 0" fill="none" stroke="#5ec8d8" stroke-width="1.2"/></svg>
<svg style="left:596px;top:1010px;" width="15" height="10" viewBox="0 0 15 10"><circle cx="4" cy="6.5" r="3" fill="none" stroke="#444" stroke-width="1.2"/><circle cx="11" cy="6.5" r="3" fill="none" stroke="#444" stroke-width="1.2"/><path d="M7 6l2-3M13 4l2-3" stroke="#444" stroke-width="1.1"/></svg>
<svg style="left:621px;top:1008px;" width="17" height="16" viewBox="0 0 17 16"><path d="M1 1v10M15 1v6M1 3h14" stroke="#444" stroke-width="1.2"/><path d="M1 11h3M6 11h2" stroke="#444" stroke-width="1.2"/><circle cx="12.5" cy="10.5" r="3.8" fill="#5ec8d8"/><path d="M11 14.5h3l-1.5 2z" fill="#666"/></svg>
<svg style="left:647px;top:1008px;" width="17" height="16" viewBox="0 0 17 16"><rect x="1" y="1" width="12" height="4" fill="none" stroke="#444" stroke-width="1.2"/><path d="M1 8h8M1 11h7" stroke="#444" stroke-width="1.4"/><circle cx="12.5" cy="10" r="3.8" fill="#5ec8d8"/><path d="M11 14h3l-1.5 2z" fill="#666"/></svg>
<div class="a" style="left:668px;top:1007px;width:880px;height:17px;background:#e8e8e8;"></div>
<div class="a" style="left:668px;top:1007px;width:17px;height:17px;background:#e0e0e0;"></div>
<svg style="left:673px;top:1011px;" width="6" height="9" viewBox="0 0 6 9"><path d="M5 1L1.5 4.5L5 8" fill="none" stroke="#888" stroke-width="1.3"/></svg>
<div class="a" style="left:1531px;top:1007px;width:17px;height:17px;background:#e4e4e4;"></div>
<svg style="left:1537px;top:1011px;" width="6" height="9" viewBox="0 0 6 9"><path d="M1 1L4.5 4.5L1 8" fill="none" stroke="#888" stroke-width="1.3"/></svg>
<div class="a" style="left:1099px;top:1013px;width:18px;height:5px;background:#cbcbcb;border-radius:3px"></div>
<div class="a" style="left:1548px;top:1007px;width:17px;height:17px;background:#efefef;"></div>
<svg style="left:1553px;top:1012px;" width="9" height="9" viewBox="0 0 9 9"><g fill="#777"><rect x="6" y="2" width="2" height="2"/><rect x="2" y="6" width="2" height="2"/><rect x="6" y="6" width="2" height="2"/></g></svg>
<div class="a" style="left:1565px;top:217px;width:2px;height:808px;background:#ffffff;"></div>
<div class="a" style="left:1567px;top:197px;width:2px;height:828px;background:#b8b8b8;"></div>
<div class="a" style="left:1569px;top:197px;width:2px;height:828px;background:#efefef;"></div>
<div class="a" style="left:1571px;top:197px;width:348px;height:828px;background:#ffffff;"></div>
<div class="a" style="left:1571px;top:197px;width:348px;height:17px;background:#d9d9d9;"></div>
<div class="t" style="left:1572px;top:200px;color:#2a2a2a;font-size:12px;">Диспетчер проекта - Люстра_4 светильника_по грани.rfa</div>
<svg style="left:1909px;top:201px;" width="10" height="10" viewBox="0 0 10 10"><path d="M1 1L9 9M9 1L1 9" stroke="#555" stroke-width="1.3"/></svg>
<div class="a" style="left:1571px;top:214px;width:348px;height:24px;background:#cbcbcb;"></div>
<div class="a" style="left:1571px;top:214px;width:24px;height:24px;background:#ffffff;"></div>
<svg style="left:1576px;top:219px;" width="16" height="16" viewBox="0 0 16 16"><path d="M1 8L7 1.5L11 5.5V2.5H12V6.5L13 7.5" fill="none" stroke="#333" stroke-width="1.1"/><path d="M2 7.5V14.5H7" fill="none" stroke="#333" stroke-width="1.1"/><rect x="4.5" y="10" width="1.5" height="4" fill="#f2b600"/><rect x="8.5" y="9" width="6" height="6" fill="#fff" stroke="#333" stroke-width="0.9"/><rect x="10" y="12.5" width="5" height="2.5" fill="#1e88e5"/></svg>
<svg style="left:1599px;top:219px;" width="16" height="16" viewBox="0 0 16 16"><path d="M1 4V1h3M12 1h3v3M15 12v3h-3M4 15H1v-3" fill="none" stroke="#333" stroke-width="1.1"/><path d="M4.5 6L6.5 4H11.5V9.5L9.5 11.5H4.5Z" fill="#e6e6e6" stroke="#444" stroke-width="1"/></svg>
<svg style="left:1622px;top:219px;" width="17" height="16" viewBox="0 0 17 16"><path d="M1 7V15H11L13 13" fill="none" stroke="#333" stroke-width="1.1"/><path d="M1 7L8 7L12 1.5A2 2 0 0 1 16 8L13 13" fill="#fff" stroke="#333" stroke-width="1.1"/><circle cx="14" cy="12.5" r="1.3" fill="none" stroke="#333" stroke-width="0.8"/></svg>
<svg style="left:1647px;top:219px;" width="16" height="16" viewBox="0 0 16 16"><path d="M1.5 1.5H7.5V9.5H1.5Z M10 1.5H14.5V14.5H1.5V12H10Z" fill="#fff" stroke="#333" stroke-width="1.1"/></svg>
<svg style="left:1670px;top:218px;" width="17" height="18" viewBox="0 0 17 18"><path d="M3 1H1V17H3M14 1H16V17H14" fill="none" stroke="#333" stroke-width="1.1"/><circle cx="7" cy="7" r="3.5" fill="#fff" stroke="#444" stroke-width="1"/><rect x="6" y="8" width="7" height="6" fill="#fff" stroke="#444" stroke-width="1"/></svg>
<svg style="left:1695px;top:219px;" width="16" height="14" viewBox="0 0 16 14"><g fill="none" stroke="#ee7a2a" stroke-width="1.3"><rect x="0.5" y="4.5" width="9" height="5" rx="2.5" transform="rotate(-40 5 7)"/><rect x="6" y="2" width="9" height="5" rx="2.5" transform="rotate(-40 10.5 4.5)"/></g></svg>
<div class="a" style="left:1579px;top:246px;width:333px;height:25px;background:#ffffff;border:1px solid #dadada"></div>
<svg style="left:1588px;top:251px;" width="16" height="17" viewBox="0 0 16 17"><circle cx="6.5" cy="6.5" r="5" fill="none" stroke="#444" stroke-width="1.3"/><path d="M10 10.5L14.5 15" stroke="#444" stroke-width="2"/></svg>
<div class="t" style="left:1612px;top:254px;color:#a9a9a9;font-size:12px;">Поиск</div>
<div class="a" style="left:1576px;top:288px;width:8px;height:2px;background:#555;"></div>
<svg style="left:1593px;top:281px;" width="16" height="16" viewBox="0 0 16 16"><path d="M1 4V1h3M12 1h3v3M15 12v3h-3M4 15H1v-3" fill="none" stroke="#333" stroke-width="1.1"/><path d="M4.5 6L6.5 4H11.5V9.5L9.5 11.5H4.5Z" fill="#dedede" stroke="#444" stroke-width="1"/></svg>
<div class="t" style="left:1614px;top:284px;color:#454545;font-size:12px;">Виды (все)</div>
<div class="a" style="left:1571px;top:339px;width:348px;height:20px;background:#f0f0f0;border-top:1px solid #dcdcdc;border-bottom:1px solid #dcdcdc"></div>
<div class="a" style="left:1579px;top:300px;width:1px;height:71px;border-left:1px dashed #aaa"></div>
<div class="a" style="left:1580px;top:309px;width:8px;height:1px;border-top:1px dashed #aaa"></div>
<div class="a" style="left:1592px;top:308px;width:8px;height:2px;background:#555;"></div>
<div class="a" style="left:1595px;top:305px;width:2px;height:8px;background:#555;"></div>
<div class="t" style="left:1610px;top:304px;color:#454545;font-size:12px;">Планы этажей</div>
<div class="a" style="left:1580px;top:329px;width:8px;height:1px;border-top:1px dashed #aaa"></div>
<div class="a" style="left:1592px;top:328px;width:8px;height:2px;background:#555;"></div>
<div class="a" style="left:1595px;top:325px;width:2px;height:8px;background:#555;"></div>
<div class="t" style="left:1610px;top:324px;color:#454545;font-size:12px;">Планы потолков</div>
<div class="a" style="left:1580px;top:349px;width:8px;height:1px;border-top:1px dashed #aaa"></div>
<div class="a" style="left:1592px;top:348px;width:8px;height:2px;background:#555;"></div>
<div class="a" style="left:1595px;top:345px;width:2px;height:8px;background:#555;"></div>
<div class="t" style="left:1610px;top:344px;color:#454545;font-size:12px;">3D виды</div>
<div class="a" style="left:1580px;top:369px;width:8px;height:1px;border-top:1px dashed #aaa"></div>
<div class="a" style="left:1592px;top:368px;width:8px;height:2px;background:#555;"></div>
<div class="a" style="left:1595px;top:365px;width:2px;height:8px;background:#555;"></div>
<div class="t" style="left:1610px;top:364px;color:#454545;font-size:12px;">Фасады (Фасад 1)</div>
<svg style="left:1592px;top:382px;" width="16" height="15" viewBox="0 0 16 15"><path d="M1 6V14H11L13 12" fill="none" stroke="#333" stroke-width="1"/><path d="M1 6L7.5 6L11 1A2 2 0 0 1 15 7L12.5 12" fill="#fff" stroke="#333" stroke-width="1"/><circle cx="13" cy="11.5" r="1.2" fill="none" stroke="#333" stroke-width="0.8"/></svg>
<div class="t" style="left:1613px;top:384px;color:#454545;font-size:12px;">Листы (все)</div>
<div class="a" style="left:1576px;top:408px;width:8px;height:2px;background:#555;"></div>
<svg style="left:1593px;top:402px;" width="16" height="15" viewBox="0 0 16 15"><path d="M1.5 1.5H7.5V9.5H1.5Z M10 1.5H14.5V14H1.5V11.5H10Z" fill="#fff" stroke="#333" stroke-width="1.1"/></svg>
<div class="t" style="left:1614px;top:404px;color:#454545;font-size:12px;">Семейства</div>
<div class="a" style="left:1579px;top:420px;width:1px;height:51px;border-left:1px dashed #aaa"></div>
<div class="a" style="left:1580px;top:429px;width:8px;height:1px;border-top:1px dashed #aaa"></div>
<div class="a" style="left:1592px;top:428px;width:8px;height:2px;background:#555;"></div>
<div class="a" style="left:1595px;top:425px;width:2px;height:8px;background:#555;"></div>
<div class="t" style="left:1610px;top:424px;color:#454545;font-size:12px;">Аннотационные обозначения</div>
<div class="a" style="left:1580px;top:449px;width:8px;height:1px;border-top:1px dashed #aaa"></div>
<div class="a" style="left:1592px;top:448px;width:8px;height:2px;background:#555;"></div>
<div class="a" style="left:1595px;top:445px;width:2px;height:8px;background:#555;"></div>
<div class="t" style="left:1610px;top:444px;color:#454545;font-size:12px;">Осветительные приборы</div>
<div class="a" style="left:1580px;top:469px;width:8px;height:1px;border-top:1px dashed #aaa"></div>
<div class="a" style="left:1592px;top:468px;width:8px;height:2px;background:#555;"></div>
<div class="a" style="left:1595px;top:465px;width:2px;height:8px;background:#555;"></div>
<div class="t" style="left:1610px;top:464px;color:#454545;font-size:12px;">Связи аналитической модели</div>
<div class="a" style="left:1576px;top:488px;width:8px;height:2px;background:#555;"></div>
<div class="a" style="left:1579px;top:485px;width:2px;height:8px;background:#555;"></div>
<svg style="left:1593px;top:481px;" width="16" height="17" viewBox="0 0 16 17"><path d="M3 1H1V16H3M13 1H15V16H13" fill="none" stroke="#333" stroke-width="1.1"/><circle cx="6.5" cy="6.5" r="3.3" fill="#fff" stroke="#444" stroke-width="1"/><rect x="5.5" y="7.5" width="6.5" height="5.5" fill="#fff" stroke="#444" stroke-width="1"/></svg>
<div class="t" style="left:1614px;top:484px;color:#454545;font-size:12px;">Группы</div>
<svg style="left:1593px;top:503px;" width="16" height="14" viewBox="0 0 16 14"><g fill="none" stroke="#ee7a2a" stroke-width="1.3"><rect x="0.5" y="4.5" width="9" height="5" rx="2.5" transform="rotate(-40 5 7)"/><rect x="6" y="2" width="9" height="5" rx="2.5" transform="rotate(-40 10.5 4.5)"/></g></svg>
<div class="t" style="left:1613px;top:504px;color:#454545;font-size:12px;">Связанные файлы Revit</div>
<div class="a" style="left:0px;top:1025px;width:1919px;height:25px;background:#f3f3f3;"></div>
<div class="t" style="left:2px;top:1033px;color:#222;font-size:11.7px;">Щелчок - выбор, TAB - варианты, CTRL - добавление, SHIFT - снятие выбора.</div>
<svg style="left:1667px;top:1030px;" width="17" height="16" viewBox="0 0 17 16"><g fill="none" stroke="#ee7a2a" stroke-width="1.2"><path d="M5 6H2a2 2 0 0 1 0-4h4a2 2 0 0 1 1 1M8 2h3a2 2 0 0 1 0 4H7"/></g><path d="M8 5L8 14L10.3 12L12 15.5L13.5 14.8L12 11.5L15 11.5Z" fill="#fff" stroke="#222" stroke-width="0.9"/></svg>
<svg style="left:1693px;top:1030px;" width="17" height="16" viewBox="0 0 17 16"><path d="M1 9L6 4H10V9Z" fill="#5aaee8"/><path d="M11 1l4 4M15 1l-4 4" stroke="#e0262b" stroke-width="1.5"/><path d="M7 5L7 14L9.3 12L11 15.5L12.5 14.8L11 11.5L14 11.5Z" fill="#fff" stroke="#222" stroke-width="0.9"/></svg>
<svg style="left:1719px;top:1030px;" width="17" height="16" viewBox="0 0 17 16"><path d="M2 2h7M2 2v4M6 2v6" fill="none" stroke="#444" stroke-width="1"/><path d="M7 5L7 14L9.3 12L11 15.5L12.5 14.8L11 11.5L14 11.5Z" fill="#fff" stroke="#222" stroke-width="0.9"/></svg>
<svg style="left:1745px;top:1030px;" width="17" height="16" viewBox="0 0 17 16"><path d="M1 4L5 1V14L1 15Z" fill="#5aaee8" stroke="#2b7bb9" stroke-width="0.6"/><path d="M5 1L8 2V12" fill="none" stroke="#2b7bb9" stroke-width="1"/><path d="M10 1l4 4M14 1l-4 4" stroke="#e0262b" stroke-width="1.5"/><path d="M7 5L7 14L9.3 12L11 15.5L12.5 14.8L11 11.5L14 11.5Z" fill="#fff" stroke="#222" stroke-width="0.9"/></svg>
<svg style="left:1771px;top:1030px;" width="17" height="16" viewBox="0 0 17 16"><path d="M5 1v12M0 6h10" stroke="#333" stroke-width="1.1"/><path d="M5 0l-2 2.5h4zM0 6l2.5-2v4zM10 6l-2.5-2v4z" fill="#333"/><path d="M7 5L7 14L9.3 12L11 15.5L12.5 14.8L11 11.5L14 11.5Z" fill="#fff" stroke="#222" stroke-width="0.9"/></svg>
<svg style="left:1797px;top:1030px;" width="16" height="16" viewBox="0 0 16 16"><circle cx="8" cy="8" r="6" fill="none" stroke="#c8c8c8" stroke-width="1.6" stroke-dasharray="2 2"/></svg>
<svg style="left:1820px;top:1030px;" width="18" height="16" viewBox="0 0 18 16"><path d="M1 1.5H15L9.5 8V15L6.5 13V8Z" fill="#fff" stroke="#333" stroke-width="1.2" stroke-linejoin="round"/></svg>
<div class="t" style="left:1836px;top:1033px;color:#222;font-size:12px;">:0</div>
<svg style="left:0px;top:0px;" width="1919" height="1050" viewBox="0 0 1919 1050">
<defs>
<radialGradient id="sphA" cx="0.6" cy="0.4" r="0.7">
 <stop offset="0" stop-color="#ffffff"/><stop offset="0.7" stop-color="#fcfdfd"/>
 <stop offset="1" stop-color="#e6eaea"/>
</radialGradient>
<linearGradient id="blueA" x1="0" y1="0" x2="1" y2="0"><stop offset="0" stop-color="#b3c6cc"/><stop offset="0.45" stop-color="#d7e7ea"/><stop offset="1" stop-color="#f0fafb"/></linearGradient>
<radialGradient id="sphB" cx="0.6" cy="0.32" r="0.8">
 <stop offset="0" stop-color="#ffffff"/><stop offset="0.55" stop-color="#fbfcfc"/>
 <stop offset="0.85" stop-color="#dde2e2"/><stop offset="1" stop-color="#a9b0b0"/>
</radialGradient>
<radialGradient id="orA" cx="0.75" cy="0.35" r="0.8">
 <stop offset="0" stop-color="#fcd29a"/><stop offset="0.6" stop-color="#f0a866"/><stop offset="1" stop-color="#d4844a"/>
</radialGradient>
<radialGradient id="orB" cx="0.72" cy="0.4" r="0.75">
 <stop offset="0" stop-color="#fff3e6"/><stop offset="0.18" stop-color="#f0c096"/><stop offset="0.55" stop-color="#dd956a"/><stop offset="1" stop-color="#a9633a"/>
</radialGradient>
<filter id="bl3" x="-50%" y="-50%" width="200%" height="200%"><feGaussianBlur stdDeviation="3"/></filter>
<linearGradient id="edgeB" gradientUnits="userSpaceOnUse" x1="946" y1="445" x2="918" y2="490"><stop offset="0" stop-color="#000" stop-opacity="0"/><stop offset="0.55" stop-color="#000" stop-opacity="0.55"/><stop offset="1" stop-color="#000" stop-opacity="0.95"/></linearGradient>
<filter id="bl1" x="-50%" y="-50%" width="200%" height="200%"><feGaussianBlur stdDeviation="1.2"/></filter>
<filter id="bl2" x="-50%" y="-50%" width="200%" height="200%"><feGaussianBlur stdDeviation="2"/></filter>
<filter id="bl6" x="-50%" y="-50%" width="200%" height="200%"><feGaussianBlur stdDeviation="6"/></filter>
<clipPath id="cA"><circle cx="635.5" cy="555" r="65.5"/></clipPath>
<clipPath id="cB"><circle cx="981" cy="501.7" r="65.3"/></clipPath><clipPath id="cBp"><circle cx="944" cy="523" r="42"/><path d="M880,420 L1060,420 L1060,545 L972,562 L935,560 L880,540 Z"/></clipPath><clipPath id="cBu"><circle cx="981" cy="501.7" r="65.3"/><circle cx="944" cy="523" r="42"/></clipPath>
<radialGradient id="orB2" cx="0.7" cy="0.36" r="0.8"><stop offset="0" stop-color="#fbe2cc"/><stop offset="0.15" stop-color="#f2bb8c"/><stop offset="0.5" stop-color="#e79d6a"/><stop offset="0.8" stop-color="#d2864f"/><stop offset="1" stop-color="#94532b"/></radialGradient>
</defs>
<g id="cones">
<g fill="none" stroke="#111" stroke-width="1.1">
<path d="M476,550.5 L584,519"/>
<path d="M603,655 L643,617"/>
<ellipse cx="538.4" cy="604.3" rx="82.3" ry="15.5" transform="rotate(37.8 538.4 604.3)"/>
<ellipse cx="539.5" cy="603.8" rx="79.5" ry="13" transform="rotate(37.8 539.5 603.8)"/>
</g>
<path d="M480,553 L584,523" stroke="#ddd" stroke-width="1"/>
<g transform="translate(316.5,183)">
<g fill="none" stroke="#111" stroke-width="1.1">
<path d="M476,550.5 L584,519"/>
<path d="M603,655 L643,617"/>
<ellipse cx="538.4" cy="604.3" rx="82.3" ry="15.5" transform="rotate(37.8 538.4 604.3)"/>
<ellipse cx="539.5" cy="603.8" rx="79.5" ry="13" transform="rotate(37.8 539.5 603.8)"/>
</g>
<path d="M480,553 L584,523" stroke="#ddd" stroke-width="1"/>
</g>
<g fill="none" stroke="#111" stroke-width="1.1">
<path d="M977.6,434.8 L1040,375"/>
<path d="M1036,538 L1075,525"/>
<ellipse cx="1077.7" cy="436.1" rx="63.5" ry="90" transform="rotate(11.2 1077.7 436.1)"/>
<ellipse cx="1077" cy="437" rx="60.5" ry="86.5" transform="rotate(11.2 1077 437)"/>
</g>
<path d="M982,437 L1036,384" stroke="#ddd" stroke-width="1"/>
<g transform="translate(316,183)">
<g fill="none" stroke="#111" stroke-width="1.1">
<path d="M977.6,434.8 L1040,375"/>
<path d="M1036,538 L1075,525"/>
<ellipse cx="1077.7" cy="436.1" rx="63.5" ry="90" transform="rotate(11.2 1077.7 436.1)"/>
<ellipse cx="1077" cy="437" rx="60.5" ry="86.5" transform="rotate(11.2 1077 437)"/>
</g>
<path d="M982,437 L1036,384" stroke="#ddd" stroke-width="1"/>
</g></g>
<ellipse cx="660" cy="534.4" rx="53.6" ry="41" transform="rotate(17 660 534.4)" fill="url(#orA)" stroke="#3a2a1a" stroke-width="0.8"/>

<ellipse cx="1003" cy="722" rx="46" ry="44" fill="#f6c896" stroke="#2a2018" stroke-width="0.9"/>
<ellipse cx="962" cy="680" rx="34" ry="17" fill="#f2b47a" stroke="#2a2018" stroke-width="0.8"/>
<g transform="translate(316.5,183)">
<ellipse cx="660" cy="534.4" rx="53.6" ry="41" transform="rotate(17 660 534.4)" fill="url(#orA)" stroke="#3a2a1a" stroke-width="0.8"/>
</g><path d="M949,612 L984,612 L984,676 L949,676 Z" fill="#0c0c0c"/><path d="M949,640 L962,640 L962,676 L949,676Z" fill="#000"/>
<circle cx="635.5" cy="555" r="65.5" fill="url(#sphA)"/>
<g clip-path="url(#cA)">
 <ellipse cx="690" cy="600" rx="40" ry="30" fill="#cfd2d2" opacity="0.55" filter="url(#bl6)"/>
 <path d="M560,500 Q 615,510 640,560 Q 652,590 651,640 L 560,640 Z" fill="url(#blueA)" filter="url(#bl2)"/>
 <ellipse cx="592" cy="512" rx="22" ry="9" transform="rotate(-35 592 512)" fill="#777" opacity="0.35" filter="url(#bl3)"/>
 <ellipse cx="655" cy="616" rx="13" ry="5" fill="#000" filter="url(#bl2)"/>
</g>
<circle cx="635.5" cy="555" r="65.5" fill="none" stroke="#111" stroke-width="1.1"/>
<path d="M661,494 A66.5 66.5 0 0 1 700,572" fill="none" stroke="#1a1008" stroke-width="2.6"/>
<path d="M571.5,560 C580,592 652,612 701,565" fill="none" stroke="#111" stroke-width="1.1"/>
<path d="M582,519 L593,516" stroke="#111" stroke-width="1"/>
<g transform="translate(316.5,183)">
<circle cx="635.5" cy="555" r="65.5" fill="url(#sphA)"/>
<g clip-path="url(#cA2)">
 <ellipse cx="690" cy="600" rx="40" ry="30" fill="#cfd2d2" opacity="0.55" filter="url(#bl6)"/>
 <path d="M560,500 Q 615,510 640,560 Q 652,590 651,640 L 560,640 Z" fill="url(#blueA)" filter="url(#bl2)"/>
 <ellipse cx="592" cy="512" rx="22" ry="9" transform="rotate(-35 592 512)" fill="#777" opacity="0.35" filter="url(#bl3)"/>
 <ellipse cx="655" cy="616" rx="13" ry="5" fill="#000" filter="url(#bl2)"/>
</g>
<circle cx="635.5" cy="555" r="65.5" fill="none" stroke="#111" stroke-width="1.1"/>
<path d="M661,494 A66.5 66.5 0 0 1 700,572" fill="none" stroke="#1a1008" stroke-width="2.6"/>
<path d="M571.5,560 C580,592 652,612 701,565" fill="none" stroke="#111" stroke-width="1.1"/>
<path d="M582,519 L593,516" stroke="#111" stroke-width="1"/>
</g><clipPath id="cA2"><circle cx="635.5" cy="555" r="65.5"/></clipPath>
<circle cx="944" cy="523" r="42" fill="url(#orB2)" stroke="#1a1410" stroke-width="1"/>
<circle cx="981" cy="501.7" r="65.3" fill="url(#sphB)"/>
<g clip-path="url(#cB)">
 <path d="M946,447 A63 63 0 0 0 918,488" fill="none" stroke="url(#edgeB)" stroke-width="9" filter="url(#bl1)"/>
 <ellipse cx="1020" cy="548" rx="34" ry="14" fill="#8a9090" opacity="0.45" filter="url(#bl6)"/>
 <ellipse cx="1000" cy="564" rx="36" ry="8" fill="#000" filter="url(#bl2)"/>
 <ellipse cx="1032" cy="556" rx="13" ry="6" fill="#000" opacity="0.7" filter="url(#bl3)"/>
</g>
<circle cx="981" cy="501.7" r="65.3" fill="none" stroke="#111" stroke-width="1.1"/>
<g clip-path="url(#cBu)"><g clip-path="url(#cBp)">
 <ellipse cx="940.7" cy="527.4" rx="30" ry="47.6" transform="rotate(-26.9 940.7 527.4)" fill="url(#orB2)"/>
 <ellipse cx="925" cy="556" rx="28" ry="12" fill="#6e3a1a" opacity="0.45" filter="url(#bl3)"/>
 <ellipse cx="960" cy="510" rx="6" ry="12" transform="rotate(-30 960 510)" fill="#fff8f0" opacity="0.95" filter="url(#bl3)"/>
 <path d="M928,483.5 A30 47.6 -26.9 0 1 971,560" fill="none" stroke="#111" stroke-width="1.3"/>
</g></g>
<path d="M975,539.3 C1000,538 1030,528 1045.5,512" fill="none" stroke="#111" stroke-width="1.1"/>
<g transform="translate(316,183)">
<circle cx="944" cy="523" r="42" fill="url(#orB2)" stroke="#1a1410" stroke-width="1"/>
<circle cx="981" cy="501.7" r="65.3" fill="url(#sphB)"/>
<g clip-path="url(#cB2)">
 <path d="M946,447 A63 63 0 0 0 918,488" fill="none" stroke="url(#edgeB)" stroke-width="9" filter="url(#bl1)"/>
 <ellipse cx="1020" cy="548" rx="34" ry="14" fill="#8a9090" opacity="0.45" filter="url(#bl6)"/>
 <ellipse cx="1000" cy="564" rx="36" ry="8" fill="#000" filter="url(#bl2)"/>
 <ellipse cx="1032" cy="556" rx="13" ry="6" fill="#000" opacity="0.7" filter="url(#bl3)"/>
</g>
<circle cx="981" cy="501.7" r="65.3" fill="none" stroke="#111" stroke-width="1.1"/>
<g clip-path="url(#cBu2)"><g clip-path="url(#cBp)">
 <ellipse cx="940.7" cy="527.4" rx="30" ry="47.6" transform="rotate(-26.9 940.7 527.4)" fill="url(#orB2)"/>
 <ellipse cx="925" cy="556" rx="28" ry="12" fill="#6e3a1a" opacity="0.45" filter="url(#bl3)"/>
 <ellipse cx="960" cy="510" rx="6" ry="12" transform="rotate(-30 960 510)" fill="#fff8f0" opacity="0.95" filter="url(#bl3)"/>
 <path d="M928,483.5 A30 47.6 -26.9 0 1 971,560" fill="none" stroke="#111" stroke-width="1.3"/>
</g></g>
<path d="M975,539.3 C1000,538 1030,528 1045.5,512" fill="none" stroke="#111" stroke-width="1.1"/>
</g><clipPath id="cB2"><circle cx="981" cy="501.7" r="65.3"/></clipPath><clipPath id="cBu2"><circle cx="981" cy="501.7" r="65.3"/><circle cx="944" cy="523" r="42"/></clipPath><path d="M649,437 Q691.4,468.2 730,504 Q808.4,530.4 888,553 Q931.6,581.2 966,620 Q1009.9,649.4 1046,688 Q1124.4,714.4 1204,737 Q1247.9,764.1 1283,802" fill="none" stroke="#0d0d0d" stroke-width="21" stroke-linejoin="round"/><path d="M649,437 Q691.4,468.2 730,504 Q808.4,530.4 888,553 Q931.6,581.2 966,620 Q1009.9,649.4 1046,688 Q1124.4,714.4 1204,737 Q1247.9,764.1 1283,802" fill="none" stroke="#000" stroke-width="8" transform="translate(-2.5,5)" stroke-linejoin="round" opacity="0.55"/><path d="M728,506 L710,513" stroke="#0d0d0d" stroke-width="20" stroke-linecap="round"/><path d="M890,551 L919,542" stroke="#0d0d0d" stroke-width="19" stroke-linecap="round"/><path d="M1045,688 L1025,697" stroke="#0d0d0d" stroke-width="20" stroke-linecap="round"/><path d="M1206,735 L1236,726" stroke="#0d0d0d" stroke-width="19" stroke-linecap="round"/><circle cx="730" cy="497" r="13.5" fill="#0f0f0f" stroke="#000" stroke-width="1"/><circle cx="888" cy="553" r="14.5" fill="#0f0f0f" stroke="#000" stroke-width="1"/><circle cx="966" cy="617" r="20" fill="#0f0f0f" stroke="#000" stroke-width="1"/><circle cx="1046" cy="681" r="14.5" fill="#0f0f0f" stroke="#000" stroke-width="1"/><circle cx="1204" cy="736" r="14" fill="#0f0f0f" stroke="#000" stroke-width="1"/></svg>
<svg style="left:1440px;top:235px;" width="100" height="100" viewBox="0 0 100 100">
<defs><linearGradient id="cubeL" x1="0" y1="0" x2="0" y2="1"><stop offset="0" stop-color="#f4f4f4"/><stop offset="1" stop-color="#dedede"/></linearGradient><linearGradient id="cubeR" x1="0" y1="0" x2="0" y2="1"><stop offset="0" stop-color="#f2f2f2"/><stop offset="1" stop-color="#dadada"/></linearGradient><radialGradient id="cubesh" cx="0.5" cy="0.5" r="0.5"><stop offset="0" stop-color="#000" stop-opacity="0.18"/><stop offset="1" stop-color="#000" stop-opacity="0"/></radialGradient></defs>
<ellipse cx="50" cy="82" rx="42" ry="14" fill="url(#cubesh)"/>
<path d="M47.6,6.9 L83.5,25.4 L47.6,43.3 L12.3,22.6 Z" fill="#ececec" stroke="#a9a9a9" stroke-width="0.9"/>
<path d="M12.3,22.6 L47.6,43.3 L47.6,84.2 L15.9,65.4 Z" fill="url(#cubeL)" stroke="#a9a9a9" stroke-width="0.9"/>
<path d="M47.6,43.3 L83.5,25.4 L80.2,64 L47.6,84.2 Z" fill="url(#cubeR)" stroke="#a9a9a9" stroke-width="0.9"/>
<text x="0" y="0" font-family="Liberation Sans" font-size="10" font-style="italic" fill="#9a9a9a" transform="translate(37,17) rotate(27)">Сверху</text>
<text x="0" y="0" font-family="Liberation Sans" font-size="10.5" font-style="italic" fill="#9a9a9a" transform="translate(14.5,45.5) rotate(33)">Спереди</text>
<text x="0" y="0" font-family="Liberation Sans" font-size="9.5" font-style="italic" fill="#9a9a9a" transform="translate(51,65) rotate(-30)">Справа</text>
</svg>
<div class="a" style="left:1513px;top:340px;width:34px;height:116px;background:#fbfbfb;border:1.5px solid #b9b9b9;border-radius:6px"></div>
<svg style="left:1513px;top:340px;" width="34" height="116" viewBox="0 0 34 116">
<circle cx="27" cy="6.5" r="3.6" fill="none" stroke="#aaa" stroke-width="1"/><path d="M25.3,4.8l3.4,3.4M28.7,4.8l-3.4,3.4" stroke="#aaa" stroke-width="0.9"/>
<circle cx="13" cy="28" r="8.5" fill="#f4f4f4" stroke="#8a8a8a" stroke-width="1.3"/><circle cx="13" cy="28" r="4" fill="none" stroke="#8a8a8a" stroke-width="1.1"/>
<path d="M17,31 L20,28 L29,28 L29,37 L26,40 L17,40 Z" fill="#a9cdf0" stroke="#4a8fd0" stroke-width="0.9"/>
<path d="M13,49 h6 l-3,3z" fill="#888"/>
<path d="M3,57.5 h28" stroke="#c8c8c8" stroke-width="1"/>
<rect x="9" y="66" width="11" height="11" fill="#9fd08f" stroke="#6aa86a" stroke-width="0.6"/>
<circle cx="20.5" cy="78" r="4.2" fill="#fff" stroke="#666" stroke-width="1.2"/><path d="M23.5,81 L26,83.5" stroke="#666" stroke-width="1.6"/>
<path d="M13,91 h6 l-3,3z" fill="#888"/>
<circle cx="27" cy="108.5" r="3.6" fill="none" stroke="#aaa" stroke-width="1"/><path d="M25,108.5h4" stroke="#aaa" stroke-width="1"/>
</svg>
</body></html>
